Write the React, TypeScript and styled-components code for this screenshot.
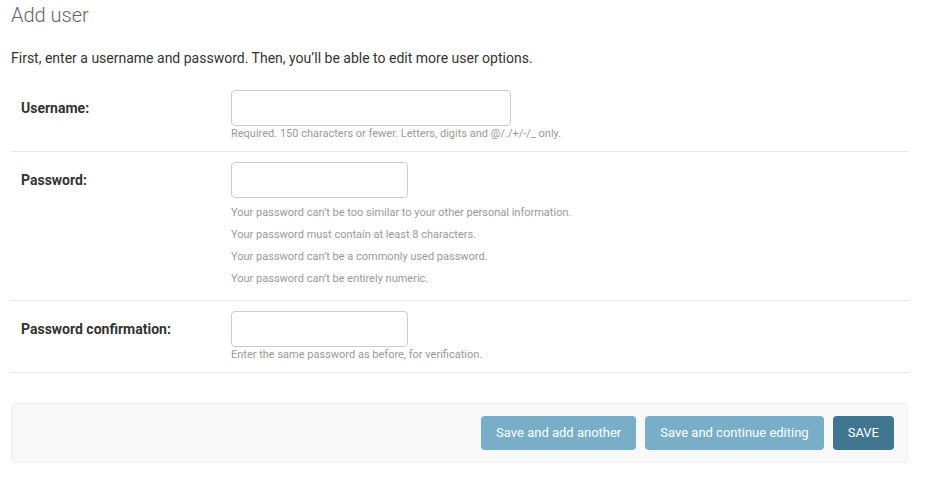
import styled, { createGlobalStyle } from "styled-components";

const GlobalStyle = createGlobalStyle`
  html, body {
    margin: 0;
    padding: 0;
    background: #fff;
  }
  body {
    font-family: Roboto, "Liberation Sans", Arial, sans-serif;
    font-size: 14px;
    color: #333;
  }
  * {
    box-sizing: border-box;
  }
`;

const Page = styled.div`
  padding: 0 21px 0 11px;
`;

const Title = styled.h1`
  margin: 0;
  padding-top: 3px;
  font-size: 20px;
  line-height: 24px;
  font-weight: 300;
  color: #666;
`;

const Intro = styled.p`
  margin: 21px 0 0;
  font-size: 14px;
  line-height: 20px;
  color: #333;
`;

const Fieldset = styled.div`
  margin-top: 12px;
`;

const FormRow = styled.div`
  display: flex;
  padding: 10px;
  border-bottom: 1px solid #e8e8e8;
`;

const Label = styled.label`
  flex: 0 0 210px;
  padding-top: 10px;
  font-size: 14px;
  line-height: 16px;
  font-weight: bold;
  color: #333;
`;

const Field = styled.div`
  display: flex;
  flex-direction: column;
`;

const Input = styled.input<{ $width: number }>`
  width: ${(p) => p.$width}px;
  height: 36px;
  margin: 0;
  padding: 5px 6px;
  border: 1px solid #ccc;
  border-radius: 4px;
  font-family: inherit;
  font-size: 14px;
  background: #fff;
`;

const Help = styled.div`
  margin-top: 1px;
  font-size: 11px;
  line-height: 14px;
  color: #999;
`;

const HelpList = styled.ul`
  margin: 4px 0 0;
  padding: 0;
  list-style: none;
  font-size: 11px;
  line-height: 22px;
  color: #999;
`;

const SubmitRow = styled.div`
  display: flex;
  justify-content: flex-end;
  gap: 9px;
  margin-top: 30px;
  padding: 12px 13px 12px 14px;
  background: #f8f8f8;
  border: 1px solid #eee;
  border-radius: 4px;
`;

const Button = styled.button<{ $primary?: boolean }>`
  height: 34px;
  padding: 0 15px;
  border: none;
  border-radius: 4px;
  background: ${(p) => (p.$primary ? "#417690" : "#79aec8")};
  color: #fff;
  font-family: inherit;
  font-size: 13px;
  line-height: 34px;
  cursor: pointer;
`;

const passwordHelp = [
  "Your password can’t be too similar to your other personal information.",
  "Your password must contain at least 8 characters.",
  "Your password can’t be a commonly used password.",
  "Your password can’t be entirely numeric.",
];

export default function App() {
  return (
    <Page>
      <GlobalStyle />
      <Title>Add user</Title>
      <Intro>
        First, enter a username and password. Then, you’ll be able to edit more user options.
      </Intro>
      <Fieldset>
        <FormRow>
          <Label htmlFor="id_username">Username:</Label>
          <Field>
            <Input id="id_username" type="text" $width={280} />
            <Help>Required. 150 characters or fewer. Letters, digits and @/./+/-/_ only.</Help>
          </Field>
        </FormRow>
        <FormRow>
          <Label htmlFor="id_password1">Password:</Label>
          <Field>
            <Input id="id_password1" type="password" $width={177} />
            <HelpList>
              {passwordHelp.map((text) => (
                <li key={text}>{text}</li>
              ))}
            </HelpList>
          </Field>
        </FormRow>
        <FormRow>
          <Label htmlFor="id_password2">Password confirmation:</Label>
          <Field>
            <Input id="id_password2" type="password" $width={177} />
            <Help>Enter the same password as before, for verification.</Help>
          </Field>
        </FormRow>
      </Fieldset>
      <SubmitRow>
        <Button>Save and add another</Button>
        <Button>Save and continue editing</Button>
        <Button $primary>SAVE</Button>
      </SubmitRow>
    </Page>
  );
}
